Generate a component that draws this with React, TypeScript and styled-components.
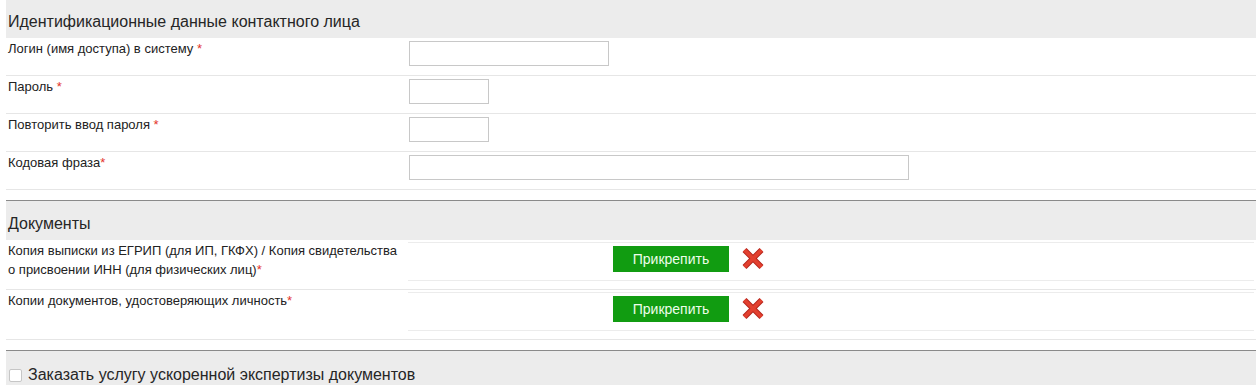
import React from 'react';
import styled, { createGlobalStyle } from 'styled-components';

const GlobalStyle = createGlobalStyle`
  body {
    margin: 0;
    background: #ffffff;
    font-family: "Liberation Sans", Arial, sans-serif;
    color: #222222;
  }
`;

const Page = styled.div`
  padding: 0 1px 0 6px;
`;

const Section = styled.section<{ $divided?: boolean }>`
  border-top: ${p => (p.$divided ? '1px solid #8a8a8a' : 'none')};
`;

// text sits low in the grey band: the taller the band, the more top padding
const SectionHeader = styled.div<{ $height?: number }>`
  box-sizing: border-box;
  height: ${p => p.$height ?? 38}px;
  padding: ${p => (p.$height ?? 38) - 25}px 0 0 2px;
  background: #ececec;
  font-size: 16px;
  line-height: 18px;
  color: #262626;
`;

const Rows = styled.div`
  margin-bottom: 10px;
`;

const FieldRow = styled.div<{ $height: number }>`
  box-sizing: border-box;
  display: grid;
  grid-template-columns: 402px 1fr;
  height: ${p => p.$height}px;
  border-bottom: 1px solid #e6e6e6;
`;

const Label = styled.div`
  padding: 1px 0 0 2px;
  font-size: 13px;
  line-height: 19px;
  color: #222222;
`;

const Star = styled.span`
  color: #e3342b;
`;

const TextInput = styled.input<{ $w: number }>`
  box-sizing: border-box;
  display: block;
  width: ${p => p.$w}px;
  height: 25px;
  margin: 3px 0 0 1px;
  padding: 2px 4px;
  border: 1px solid #c8c8c8;
  border-radius: 0;
  background: #ffffff;
  font: 13px "Liberation Sans", Arial, sans-serif;
  outline: none;
`;

const AttachCell = styled.div`
  padding-top: 2px;
`;

const AttachBox = styled.div`
  box-sizing: border-box;
  display: flex;
  align-items: flex-start;
  gap: 13px;
  height: 39px;
  margin-right: 2px;
  padding: 3px 0 0 205px;
  border-top: 1px solid #ececec;
  border-bottom: 1px solid #ececec;
`;

const AttachButton = styled.button`
  box-sizing: border-box;
  width: 116px;
  height: 26px;
  padding: 0;
  border: none;
  background: #119c11;
  color: #eefdeb;
  font: 14px "Liberation Sans", Arial, sans-serif;
  cursor: pointer;
`;

const RemoveButton = styled.button`
  display: flex;
  margin-top: 2px;
  padding: 0;
  border: none;
  background: none;
  cursor: pointer;
`;

const CheckLabel = styled.label`
  display: inline-flex;
  align-items: center;
  gap: 6px;
  cursor: pointer;
`;

const Check = styled.input`
  appearance: none;
  box-sizing: border-box;
  width: 13px;
  height: 13px;
  margin: 0 0 0 1px;
  border: 1px solid #c6c6c6;
  border-radius: 2px;
  background: #ffffff;
`;

const RemoveIcon = () => (
  <svg width="22" height="21" viewBox="0 0 22 21">
    <g strokeLinecap="butt">
      <path d="M2.5 2 L19.5 19 M19.5 2 L2.5 19" stroke="#b3241b" strokeWidth="5.6" />
      <path d="M2.5 2 L19.5 19 M19.5 2 L2.5 19" stroke="#e2402f" strokeWidth="3.8" />
    </g>
  </svg>
);

const fields = [
  { label: 'Логин (имя доступа) в систему', gap: true, width: 200 },
  { label: 'Пароль', gap: true, width: 80 },
  { label: 'Повторить ввод пароля', gap: true, width: 80 },
  { label: 'Кодовая фраза', gap: false, width: 500 },
];

const documents = [
  ['Копия выписки из ЕГРИП (для ИП, ГКФХ) / Копия свидетельства', 'о присвоении ИНН (для физических лиц)'],
  ['Копии документов, удостоверяющих личность'],
];

const App: React.FC = () => {
  return (
    <>
      <GlobalStyle />
      <Page>
        <Section>
          <SectionHeader>Идентификационные данные контактного лица</SectionHeader>
          <Rows>
            {fields.map(f => (
              <FieldRow key={f.label} $height={38}>
                <Label>
                  {f.label}
                  {f.gap ? ' ' : ''}
                  <Star>*</Star>
                </Label>
                <div>
                  <TextInput type="text" $w={f.width} />
                </div>
              </FieldRow>
            ))}
          </Rows>
        </Section>

        <Section $divided>
          <SectionHeader $height={39}>Документы</SectionHeader>
          <Rows>
            {documents.map(lines => (
              <FieldRow key={lines[0]} $height={50}>
                <Label>
                  {lines.map((line, i) => (
                    <React.Fragment key={line}>
                      {i > 0 && <br />}
                      {line}
                    </React.Fragment>
                  ))}
                  <Star>*</Star>
                </Label>
                <AttachCell>
                  <AttachBox>
                    <AttachButton type="button">Прикрепить</AttachButton>
                    <RemoveButton type="button" aria-label="Удалить">
                      <RemoveIcon />
                    </RemoveButton>
                  </AttachBox>
                </AttachCell>
              </FieldRow>
            ))}
          </Rows>
        </Section>

        <Section $divided>
          <SectionHeader $height={40}>
            <CheckLabel>
              <Check type="checkbox" />
              Заказать услугу ускоренной экспертизы документов
            </CheckLabel>
          </SectionHeader>
        </Section>
      </Page>
    </>
  );
};

export default App;
